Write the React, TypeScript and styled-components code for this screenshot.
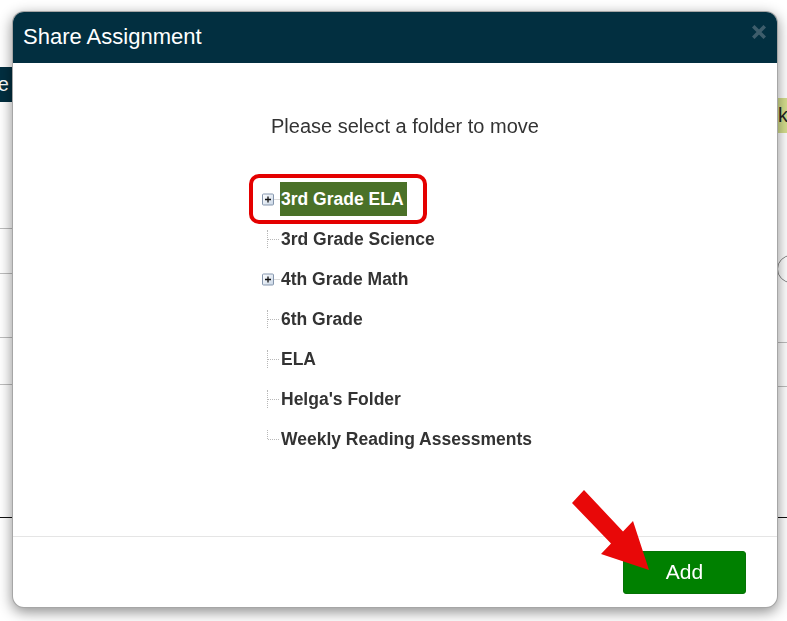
import React from 'react';
import styled, { createGlobalStyle } from 'styled-components';

const GlobalStyle = createGlobalStyle`
  html, body {
    margin: 0;
    padding: 0;
    background: #ffffff;
    font-family: 'Liberation Sans', Arial, sans-serif;
  }
`;

interface FolderItem {
  name: string;
  expandable?: boolean;
  selected?: boolean;
}

const folders: FolderItem[] = [
  { name: '3rd Grade ELA', expandable: true, selected: true },
  { name: '3rd Grade Science' },
  { name: '4th Grade Math', expandable: true },
  { name: '6th Grade' },
  { name: 'ELA' },
  { name: "Helga's Folder" },
  { name: 'Weekly Reading Assessments' }
];

// page behind the dialog, only its edges show
const Page = styled.div`
  width: 787px;
  height: 621px;
  display: flex;
  justify-content: space-between;
  overflow: hidden;
`;

const Pane = styled.div<{ $top: number; $width: number }>`
  width: ${(p) => p.$width}px;
  display: flex;
  flex-direction: column;
  padding-top: ${(p) => p.$top}px;
  overflow: hidden;
`;

const Tab = styled.div<{ $bg: string; $color: string; $align: 'left' | 'right' }>`
  height: 35px;
  background: ${(p) => p.$bg};
  color: ${(p) => p.$color};
  font-size: 20px;
  line-height: 35px;
  display: flex;
  justify-content: ${(p) => (p.$align === 'left' ? 'flex-end' : 'flex-start')};
  overflow: hidden;
  white-space: nowrap;
  padding: ${(p) => (p.$align === 'left' ? '0 31px 0 0' : '0 0 0 1px')};
`;

const Rule = styled.div<{ $gap: number; $color?: string }>`
  margin-top: ${(p) => p.$gap}px;
  border-top: 1px solid ${(p) => p.$color || '#bdbdbd'};
`;

const Toggle = styled.div`
  margin-top: 122px;
  width: 26px;
  height: 26px;
  flex-shrink: 0;
  border: 1px solid #888;
  border-radius: 50%;
`;

// dialog
const Modal = styled.div`
  position: fixed;
  left: 12px;
  top: 11px;
  width: 766px;
  height: 597px;
  background: #fff;
  border-radius: 12px;
  border: 1px solid rgba(0, 0, 0, 0.35);
  box-sizing: border-box;
  box-shadow: 0 4px 14px rgba(0, 0, 0, 0.45);
  display: flex;
  flex-direction: column;
  overflow: hidden;
`;

const Header = styled.div`
  height: 51px;
  background: #022f40;
  display: flex;
  align-items: center;
  justify-content: space-between;
  padding: 0 11px 0 10px;
  flex-shrink: 0;
`;

const Title = styled.h4`
  margin: 0;
  color: #fff;
  font-size: 22px;
  font-weight: normal;
  padding-bottom: 1px;
`;

const Close = styled.button`
  border: 0;
  background: transparent;
  padding: 0;
  width: 14px;
  height: 14px;
  margin-top: -12px;
  display: flex;
  cursor: pointer;
`;

const Body = styled.div`
  flex: 1;
  display: flex;
  flex-direction: column;
  align-items: center;
  padding: 52px 0 0 20px;
`;

const Prompt = styled.p`
  margin: 0;
  font-size: 20px;
  line-height: 23px;
  color: #333;
`;

const Tree = styled.ul`
  list-style: none;
  margin: 41px 0 0;
  padding: 0 0 0 229px;
  align-self: stretch;
`;

const Row = styled.li`
  height: 40px;
  display: flex;
  align-items: center;
`;

const Callout = styled.div`
  position: relative;
  display: flex;
  align-items: center;
  &::before {
    content: '';
    position: absolute;
    left: -13px;
    right: -20px;
    top: -8px;
    bottom: -8px;
    border: 4px solid #e40000;
    border-radius: 10px;
    pointer-events: none;
  }
`;

const Slot = styled.span`
  width: 18px;
  height: 18px;
  position: relative;
  flex-shrink: 0;
`;

const Connector = styled.span<{ $last?: boolean }>`
  position: absolute;
  left: 5px;
  top: 0;
  height: ${(p) => (p.$last ? '9px' : '18px')};
  border-left: 1px dotted #b8b8b8;
  &::after {
    content: '';
    position: absolute;
    left: 0;
    top: 9px;
    width: 11px;
    border-top: 1px dotted #b8b8b8;
  }
`;

const Label = styled.span<{ $selected?: boolean }>`
  font-size: 17.5px;
  font-weight: bold;
  color: ${(p) => (p.$selected ? '#fff' : '#333')};
  background: ${(p) => (p.$selected ? '#4a7128' : 'transparent')};
  height: 34px;
  line-height: 34px;
  padding: 0 3px 0 1px;
  white-space: nowrap;
`;

const Footer = styled.div`
  height: 70px;
  border-top: 1px solid #e5e5e5;
  display: flex;
  align-items: center;
  justify-content: flex-end;
  padding-right: 31px;
  flex-shrink: 0;
`;

const AddButton = styled.button`
  width: 123px;
  height: 43px;
  background: #008000;
  border: 1px solid #057305;
  border-radius: 3px;
  color: #fff;
  font-family: 'Liberation Sans', Arial, sans-serif;
  font-size: 21px;
  cursor: pointer;
`;

const Pointer = styled.svg`
  position: fixed;
  left: 560px;
  top: 480px;
  pointer-events: none;
`;

const PlusBox = () => (
  <svg width="18" height="18" viewBox="0 0 18 18">
    <defs>
      <linearGradient id="pb" x1="0" y1="0" x2="1" y2="1">
        <stop offset="0" stopColor="#ffffff" />
        <stop offset="1" stopColor="#c9d6e6" />
      </linearGradient>
    </defs>
    <rect x="0.5" y="4" width="11" height="11" fill="url(#pb)" stroke="#8596ad" rx="1" />
    <path d="M3 9.5h6M6 6.5v6" stroke="#111" strokeWidth="1.3" />
    <path d="M12.5 9.5h5" stroke="#b8b8b8" strokeDasharray="1 1" />
  </svg>
);

function FolderRow({ item, last }: { item: FolderItem; last: boolean }) {
  const content = (
    <>
      <Slot>{item.expandable ? <PlusBox /> : <Connector $last={last} />}</Slot>
      <Label $selected={item.selected}>{item.name}</Label>
    </>
  );
  return <Row>{item.selected ? <Callout>{content}</Callout> : content}</Row>;
}

export default function App() {
  return (
    <>
      <GlobalStyle />
      <Page>
        <Pane $top={67} $width={40}>
          <Tab $bg="#022f40" $color="#fff" $align="left">
            Share
          </Tab>
          <Rule $gap={126} />
          <Rule $gap={44} />
          <Rule $gap={63} />
          <Rule $gap={46} />
          <Rule $gap={132} $color="#111" />
        </Pane>
        <Pane $top={98} $width={10}>
          <Tab $bg="#d5df8e" $color="#222" $align="right">
            kc
          </Tab>
          <Toggle />
          <Rule $gap={59} />
          <Rule $gap={43} />
          <Rule $gap={130} $color="#111" />
        </Pane>
      </Page>

      <Modal>
        <Header>
          <Title>Share Assignment</Title>
          <Close aria-label="Close">
            <svg width="14" height="14" viewBox="0 0 14 14">
              <path d="M2.5 2.5l9 9M11.5 2.5l-9 9" stroke="#3e5d6b" strokeWidth="3.6" strokeLinecap="square" />
            </svg>
          </Close>
        </Header>
        <Body>
          <Prompt>Please select a folder to move</Prompt>
          <Tree>
            {folders.map((item, index) => (
              <FolderRow key={item.name} item={item} last={index === folders.length - 1} />
            ))}
          </Tree>
        </Body>
        <Footer>
          <AddButton>Add</AddButton>
        </Footer>
      </Modal>

      <Pointer width="100" height="100" viewBox="0 0 100 100">
        <polygon points="24,10 63,51.5 73,41 89,90 41,74 51,63.5 12,23" fill="#e80808" />
      </Pointer>
    </>
  );
}
